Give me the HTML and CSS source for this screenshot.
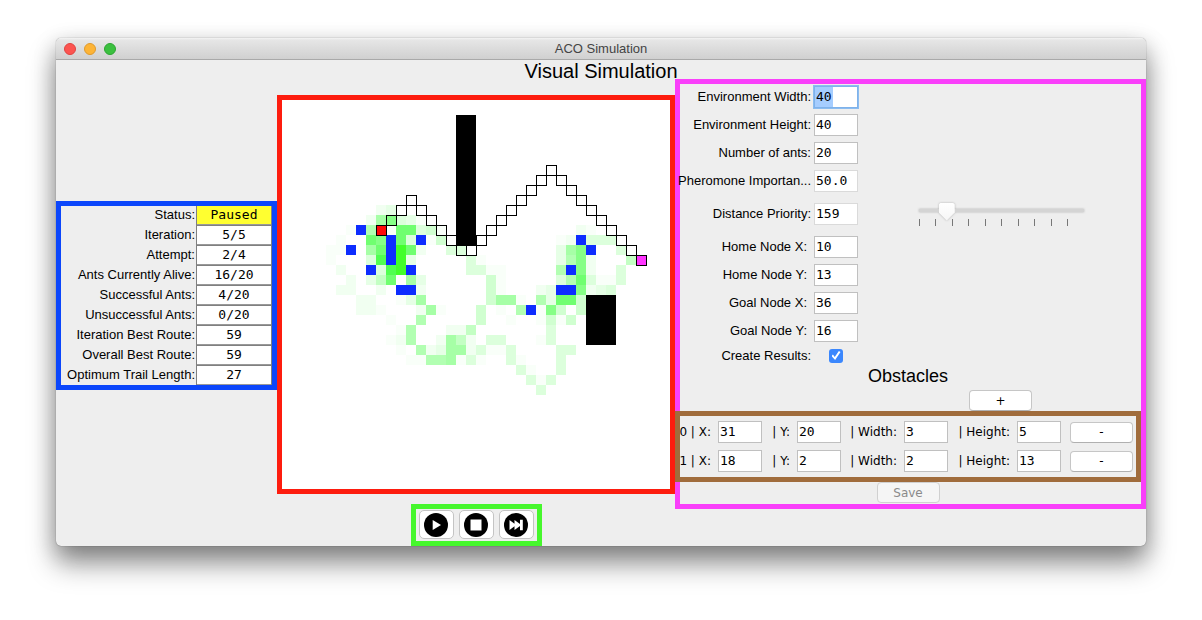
FILE: index.html
```html
<!DOCTYPE html>
<html lang="en">
<head>
<meta charset="utf-8">
<title>ACO Simulation</title>
<link rel="stylesheet" href="styles.css">
</head>
<body>
<div class="window">
  <header class="titlebar">
    <div class="lights">
      <button class="light close" aria-label="Close"></button>
      <button class="light minimise" aria-label="Minimise"></button>
      <button class="light zoom" aria-label="Zoom"></button>
    </div>
    <span class="window-title">ACO Simulation</span>
  </header>
  <main>
    <h1>Visual Simulation</h1>
    <div class="layout">
      <section class="status">
        <table>
          <tr><th scope="row">Status:</th><td class="paused">Paused</td></tr>
          <tr><th scope="row">Iteration:</th><td>5/5</td></tr>
          <tr><th scope="row">Attempt:</th><td>2/4</td></tr>
          <tr><th scope="row">Ants Currently Alive:</th><td>16/20</td></tr>
          <tr><th scope="row">Successful Ants:</th><td>4/20</td></tr>
          <tr><th scope="row">Unsuccessful Ants:</th><td>0/20</td></tr>
          <tr><th scope="row">Iteration Best Route:</th><td>59</td></tr>
          <tr><th scope="row">Overall Best Route:</th><td>59</td></tr>
          <tr><th scope="row">Optimum Trail Length:</th><td>27</td></tr>
        </table>
      </section>

      <section class="stage">
        <div class="sim">
          <svg id="world" viewBox="6 5 388 389" role="img" aria-label="Ant colony environment"></svg>
        </div>
        <div class="controls">
          <button aria-label="Play"><svg viewBox="0 0 24 24"><circle cx="12" cy="12" r="12"/><path fill="#fff" d="M8.700 7L17 12l-8.300 5z"/></svg></button>
          <button aria-label="Stop"><svg viewBox="0 0 24 24"><circle cx="12" cy="12" r="12"/><path fill="#fff" d="M6.500 6.500h11v11h-11z"/></svg></button>
          <button aria-label="Skip to end"><svg viewBox="0 0 24 24"><circle cx="12" cy="12" r="12"/><path fill="#fff" d="M5.500 7l5 3.800V7l5.500 4V6.800h2.800v10.400H16V13l-5.500 4v-3.800l-5 3.800z"/></svg></button>
        </div>
      </section>

      <section class="settings">
        <div class="form">
          <label for="ew">Environment Width:</label><input class="field focused" id="ew" value="40">
          <label for="eh">Environment Height:</label><input class="field" id="eh" value="40">
          <label for="na">Number of ants:</label><input class="field" id="na" value="20">
          <label for="ph">Pheromone Importan...</label><input class="field quiet" id="ph" value="50.0">
          <label for="dp">Distance Priority:</label><input class="field quiet" id="dp" value="159">
          <div class="slider">
            <input type="range" min="0" max="1200" value="159" aria-label="Distance priority">
            <div class="ticks"><i></i><i></i><i></i><i></i><i></i><i></i><i></i><i></i><i></i><i></i></div>
          </div>
          <label class="node" for="hx">Home Node X:</label><input class="field" id="hx" value="10">
          <label class="node" for="hy">Home Node Y:</label><input class="field" id="hy" value="13">
          <label class="node" for="gx">Goal Node X:</label><input class="field" id="gx" value="36">
          <label class="node" for="gy">Goal Node Y:</label><input class="field" id="gy" value="16">
          <label for="cr">Create Results:</label><input class="check" type="checkbox" id="cr" checked>
        </div>
        <h2>Obstacles</h2>
        <div class="add-row"><button class="push">+</button></div>
        <div class="obstacles">
          <div class="obstacle">
            <label for="x0">0 | X:</label><input class="field" id="x0" value="31">
            <label for="y0">| Y:</label><input class="field" id="y0" value="20">
            <label for="w0">| Width:</label><input class="field" id="w0" value="3">
            <label for="h0">| Height:</label><input class="field" id="h0" value="5">
            <button class="push" aria-label="Remove obstacle 0">-</button>
          </div>
          <div class="obstacle">
            <label for="x1">1 | X:</label><input class="field" id="x1" value="18">
            <label for="y1">| Y:</label><input class="field" id="y1" value="2">
            <label for="w1">| Width:</label><input class="field" id="w1" value="2">
            <label for="h1">| Height:</label><input class="field" id="h1" value="13">
            <button class="push" aria-label="Remove obstacle 1">-</button>
          </div>
        </div>
        <div class="save-row"><button class="push" disabled>Save</button></div>
      </section>
    </div>
  </main>
</div>
<script src="world.js"></script>
</body>
</html>
```
FILE: styles.css
```css
* { box-sizing: border-box; }
body {
  margin: 0;
  padding: 38px 56px 74px;
  background: #fff;
  color: #000;
  font: 13px/20px "Liberation Sans", Arial, sans-serif;
}
button, input { margin: 0; font: inherit; color: inherit; }
.window {
  min-width: 1060px;
  border-radius: 5px;
  background: #eee;
  box-shadow: 0 0 1px rgba(0,0,0,.6), 0 18px 28px rgba(0,0,0,.4), 0 6px 22px rgba(0,0,0,.22);
}
.titlebar {
  display: grid;
  grid-template-columns: 1fr auto 1fr;
  align-items: center;
  height: 22px;
  padding: 0 8px;
  border-radius: 5px 5px 0 0;
  border-bottom: 1px solid #a9a9a9;
  background: linear-gradient(#f4f4f4, #e6e6e6 2px, #d0d0d0);
}
.lights { display: flex; gap: 8px; }
.light { width: 12px; height: 12px; padding: 0; border: 1px solid; border-radius: 50%; }
.close { background: #fc5450; border-color: #e04340; }
.minimise { background: #fdb436; border-color: #df9a2c; }
.zoom { background: #3bc03f; border-color: #2ca531; }
.window-title { color: #444; line-height: 22px; }
h1, h2 { margin: 0; font-weight: 400; text-align: center; }
h1 { height: 19px; font-size: 20px; line-height: 23px; }
h2 { height: 24px; font-size: 18px; line-height: 21px; }
.layout {
  display: grid;
  grid-template-columns: 221px 398px 1fr;
  align-items: start;
}

.status { margin-top: 122px; border: 5px solid #0b46fb; overflow: hidden; }
.status table { width: 100%; margin: -1px 0; border-collapse: collapse; table-layout: fixed; }
.status tr { height: 20px; }
.status th { padding: 0 1px 2px 0; font-weight: 400; text-align: right; white-space: nowrap; line-height: 17px; }
.status td {
  width: 75px;
  padding: 0 0 2px;
  border: 1px solid #808080;
  box-shadow: inset 0 -1px #999;
  background: #fff;
  text-align: center;
  font: 13px/17px "DejaVu Sans Mono", monospace;
}
.status .paused { background: #ffff30; }

.stage { display: flex; flex-direction: column; align-items: center; padding-top: 16px; }
.sim { width: 100%; border: 5px solid #fd1c0e; background: #fff; }
.sim svg { display: block; width: 100%; shape-rendering: crispEdges; }
.controls {
  display: flex;
  gap: 5px;
  margin-top: 10px;
  padding: 1px 3px 2px;
  border: 5px solid #46f72d;
}
.controls button {
  display: grid;
  place-items: center;
  width: 35px;
  height: 29px;
  padding: 0;
  border: 1px solid #c4c4c4;
  border-radius: 5px;
  background: #fff;
}
.controls svg { display: block; width: 24px; height: 24px; }

.settings { padding-right: 5px; border: 5px solid #f93ffa; }
.form {
  display: grid;
  grid-template-columns: 131px 44px 1fr;
  grid-template-rows: repeat(4, 28px) 38px repeat(4, 28px) 21px;
  column-gap: 3px;
  align-items: center;
  margin-top: -1px;
}
.form label { grid-column: 1; display: flex; justify-content: flex-end; white-space: nowrap; }
.form .node { padding-right: 4px; }
.field {
  width: 44px;
  height: 22px;
  padding: 0 1px 2px;
  border: 1px solid #c0c0c0;
  border-radius: 0;
  background: #fff;
  font: 13px/18px "DejaVu Sans Mono", monospace;
}
.quiet { border-color: #dadada; }
.focused {
  border-color: #7fb2ea;
  box-shadow: 0 0 0 1px #8bbcf0;
  background: linear-gradient(90deg, #a5cdff 18px, #fff 18px);
}
.slider { grid-column: 3; width: 165px; margin-left: 58px; }
.slider input {
  -webkit-appearance: none;
  appearance: none;
  display: block;
  width: 100%;
  height: 18px;
  background: linear-gradient(#d4d4d4, #d4d4d4) center 6px / 100% 3px no-repeat;
  filter: drop-shadow(0 0 1px rgba(0,0,0,.25));
}
.slider input::-webkit-slider-thumb {
  -webkit-appearance: none;
  width: 16px;
  height: 18px;
  background: linear-gradient(#fff, #f6f6f6);
  clip-path: polygon(2px 0, 14px 0, 16px 2px, 16px 10px, 8px 18px, 0 10px, 0 2px);
}
.ticks { display: flex; justify-content: space-between; width: 149px; margin-top: -2px; }
.ticks i { width: 1px; height: 7px; background: #777; }
.check {
  appearance: none;
  width: 14px;
  height: 14px;
  margin-left: 15px;
  border-radius: 3px;
  background: #3b87fd;
  display: grid;
  place-items: center;
}
.check::before {
  content: "";
  width: 9px;
  height: 9px;
  background: #fff;
  clip-path: polygon(0 55%, 16% 40%, 36% 66%, 82% 0, 100% 12%, 40% 100%);
}
.push {
  width: 63px;
  height: 21px;
  padding: 0;
  border: 1px solid #c6c6c6;
  border-bottom-color: #b0b0b0;
  border-radius: 4px;
  background: #fff;
  font: 12px/18px "DejaVu Sans", sans-serif;
  text-align: center;
}
.push:disabled { border-color: #d0d0d0; background: #f5f5f5; color: #8a8a8a; }
.add-row { display: flex; justify-content: flex-end; padding-right: 104px; }
.obstacles {
  display: grid;
  gap: 7px;
  margin: 0 -5px;
  padding: 5px 0;
  border: 5px solid #a06c3c;
}
.obstacle {
  display: grid;
  grid-template-columns: 38px 44px 35px 44px 63px 44px 69px 44px 1fr;
  align-items: center;
  padding-right: 3px;
}
.obstacle label {
  display: flex;
  justify-content: flex-end;
  overflow: hidden;
  padding-right: 7px;
  font: 12px/22px "DejaVu Sans", sans-serif;
  white-space: pre;
}
.obstacle .push { justify-self: end; }
.save-row { display: flex; justify-content: center; height: 22px; }
```
FILE: world.js
```javascript
// Environment grid: each entry is "column,row", one cell is 10 units wide.
const CELL = 10;
const shades = {
  '#f9fff9': '14,12 7,13 11,13 16,13 6,14 15,14 5,15 6,15 5,16 12,20 10,21 11,22 12,23 17,23 11,24 12,25 13,26 14,26 20,16 21,17 22,17 22,18 22,19 26,19 24,20 16,21 22,21 26,21 23,22 26,22 26,24 21,25 22,25 18,26 20,26 24,26 25,27 26,28 31,13 28,14 32,18 33,18 28,22',
  '#f1fff1': '10,11 9,12 14,15 6,17 7,18 6,19 7,19 10,19 14,19 8,20 9,20 8,21 9,21 14,21 12,24 15,25 17,23 18,23 19,24 19,25 16,24 30,13 29,14 31,16 31,17 26,19 31,19 27,20',
  '#e6ffe6': '11,11 13,12 9,18 14,18 13,20 13,16 16,25 27,20 28,15 28,16 27,19 32,19',
  '#dcffdc': '12,12 14,13 13,14 17,15 9,16 10,17 18,15 19,16 19,17 20,17 27,23 21,24 22,24 27,24 20,25 23,25 19,26 23,26 24,27 25,28 26,29 27,28 28,27 28,26 28,25 29,25 31,14 32,14 33,14 34,15 34,17 28,18 31,18 34,18 33,19',
  '#d0ffd0': '15,13 16,14 9,17 21,18 21,19 21,20 20,21 20,22 27,22 30,20 28,21 30,21 29,22',
  '#c3ffc3': '10,18 19,23 18,24 35,16',
  '#b2ffb2': '9,13 14,22 13,23 13,24 14,25 15,26 16,26 24,21 29,16 28,17 29,18 26,20',
  '#a6ffa6': '10,12 9,15 13,18 14,20 15,21 17,24 17,25 18,25 17,26 22,20 23,20 29,15',
  '#86ff86': '11,12 10,14 30,15 30,16 30,17 30,19 27,21',
  '#70ff70': '12,13 13,13 9,14 12,14 10,15 13,15 11,18 30,18 28,20 29,20',
  '#50ff50': '10,16 11,17',
  '#42ff2a': '12,15 12,16 12,17',
  '#0d2dff': '8,13 11,14 14,14 7,15 11,15 11,16 9,17 13,17 12,19 13,19 25,21 30,14 31,15 29,17 28,19 29,19'
};
const obstacles = [[31, 20, 3, 5], [18, 2, 2, 13]];
const trail = '11,12 12,11 13,10 14,11 15,12 16,13 17,14 18,15 19,15 20,14 21,13 22,12 23,11 24,10 25,9 26,8 27,7 28,8 29,9 30,10 31,11 32,12 33,13 34,14 35,15';
const world = document.getElementById('world');

function box(x, y, w, h, fill, stroke) {
  const r = document.createElementNS('http://www.w3.org/2000/svg', 'rect');
  const inset = stroke ? 0.5 : 0;
  const values = { x: x * CELL + inset, y: y * CELL + inset, width: w * CELL, height: h * CELL, fill };
  if (stroke) values.stroke = stroke;
  for (const key in values) r.setAttribute(key, values[key]);
  world.appendChild(r);
}
const cells = list => list.split(' ').map(p => p.split(',').map(Number));

for (const colour in shades) {
  cells(shades[colour]).forEach(([x, y]) => box(x, y, 1, 1, colour));
}
obstacles.forEach(([x, y, w, h]) => box(x, y, w, h, '#000'));
cells(trail).forEach(([x, y]) => box(x, y, 1, 1, 'none', '#000'));
box(10, 13, 1, 1, '#ff0808', '#000');
box(36, 16, 1, 1, '#ff35ff', '#000');
```
